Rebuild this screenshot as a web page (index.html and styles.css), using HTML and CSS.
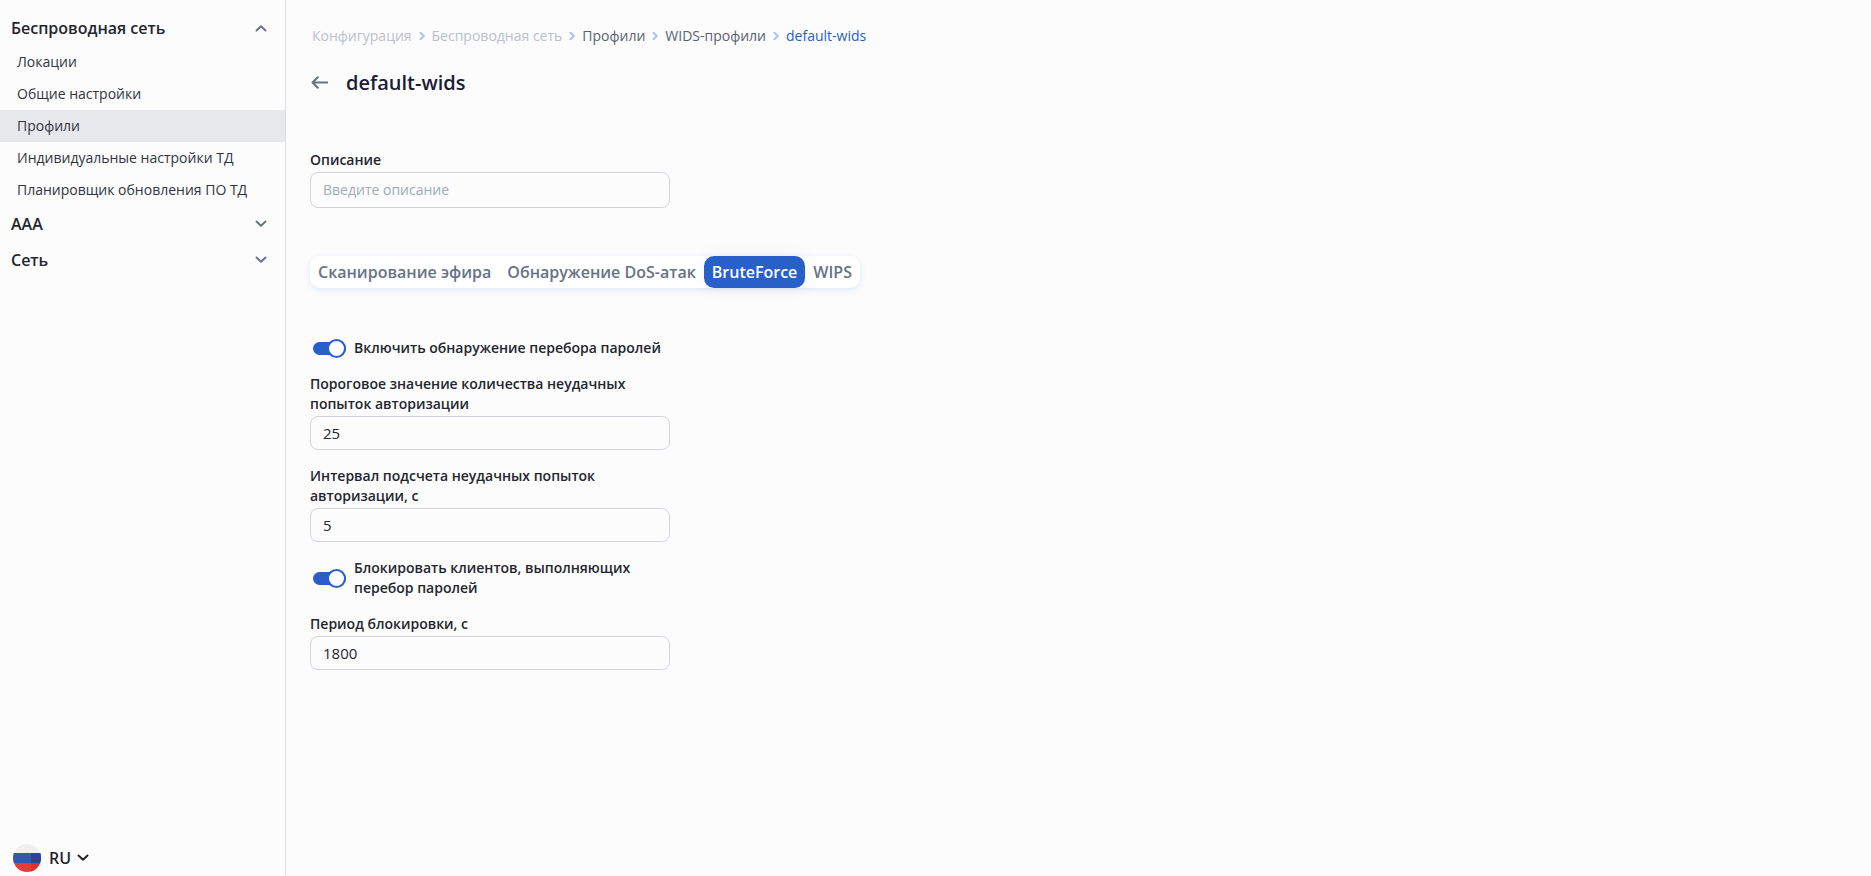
FILE: index.html
```html
<!DOCTYPE html>
<html lang="ru">
<head>
<meta charset="utf-8">
<title>default-wids</title>
<link rel="stylesheet" href="styles.css">
</head>
<body>
<div class="app">
  <aside class="sidebar">
    <nav class="menu">
      <button class="group" type="button" aria-expanded="true">Беспроводная сеть
        <svg class="chevron" viewBox="0 0 12 8"><path d="M1.5 6.500 6 2.300 10.500 6.500"/></svg>
      </button>
      <a class="item" href="#">Локации</a>
      <a class="item" href="#">Общие настройки</a>
      <a class="item item-active" href="#">Профили</a>
      <a class="item" href="#">Индивидуальные настройки ТД</a>
      <a class="item" href="#">Планировщик обновления ПО ТД</a>
      <button class="group" type="button" aria-expanded="false">AAA
        <svg class="chevron" viewBox="0 0 12 8"><path d="M1.500 1.500 6 5.700 10.500 1.500"/></svg>
      </button>
      <button class="group" type="button" aria-expanded="false">Сеть
        <svg class="chevron" viewBox="0 0 12 8"><path d="M1.500 1.500 6 5.700 10.500 1.500"/></svg>
      </button>
    </nav>
    <button class="language" type="button">
      <svg class="flag" viewBox="0 0 28 28">
        <clipPath id="round"><circle cx="14" cy="14" r="14"/></clipPath>
        <g clip-path="url(#round)">
          <path fill="#f0f0f0" d="M0 0h28v9H0z"/>
          <path fill="#3757a6" d="M0 9h28v10H0z"/>
          <path fill="#2a4593" d="M18 9h10v10H18z"/>
          <path fill="#e73b36" d="M0 19h28v9H0z"/>
          <path fill="#dc2f2c" d="M18 19h10v9H18z"/>
        </g>
      </svg>
      <span class="language-name">RU
        <svg class="chevron chevron-dark" viewBox="0 0 12 8"><path d="M1.500 1.500 6 5.700 10.500 1.500"/></svg>
      </span>
    </button>
  </aside>
  <main class="content">
    <nav class="breadcrumbs">
      <span class="crumb-muted">Конфигурация</span>
      <svg class="separator" viewBox="0 0 6 8"><path d="M1.500 .8 4.800 4 1.500 7.200"/></svg>
      <span class="crumb-muted">Беспроводная сеть</span>
      <svg class="separator" viewBox="0 0 6 8"><path d="M1.500 .8 4.800 4 1.500 7.200"/></svg>
      <a class="crumb" href="#">Профили</a>
      <svg class="separator" viewBox="0 0 6 8"><path d="M1.500 .8 4.800 4 1.500 7.200"/></svg>
      <a class="crumb" href="#">WIDS-профили</a>
      <svg class="separator" viewBox="0 0 6 8"><path d="M1.500 .8 4.800 4 1.500 7.200"/></svg>
      <a class="crumb crumb-current" href="#">default-wids</a>
    </nav>
    <header class="heading">
      <button class="back" type="button" aria-label="Назад">
        <svg viewBox="0 0 18 14"><path d="M17.500 6.500H2.500M7.800 1.300 2.500 6.500 7.800 11.700"/></svg>
      </button>
      <h1 class="title">default-wids</h1>
    </header>
    <div class="field">
      <label for="description">Описание</label>
      <input class="input input-tall" id="description" type="text" placeholder="Введите описание">
    </div>
    <div class="tabs" role="tablist">
      <button class="tab" type="button" role="tab">Сканирование эфира</button>
      <button class="tab" type="button" role="tab">Обнаружение DoS-атак</button>
      <button class="tab tab-active" type="button" role="tab" aria-selected="true">BruteForce</button>
      <button class="tab" type="button" role="tab">WIPS</button>
    </div>
    <form class="form">
      <label class="toggle"><input class="switch" type="checkbox" checked><span>Включить обнаружение перебора паролей</span></label>
      <div class="field">
        <label for="threshold">Пороговое значение количества неудачных попыток авторизации</label>
        <input class="input" id="threshold" type="text" inputmode="numeric" value="25">
      </div>
      <div class="field">
        <label for="interval">Интервал подсчета неудачных попыток авторизации, с</label>
        <input class="input" id="interval" type="text" inputmode="numeric" value="5">
      </div>
      <label class="toggle"><input class="switch" type="checkbox" checked><span>Блокировать клиентов, выполняющих перебор паролей</span></label>
      <div class="field">
        <label for="period">Период блокировки, с</label>
        <input class="input" id="period" type="text" inputmode="numeric" value="1800">
      </div>
    </form>
  </main>
</div>
</body>
</html>
```

FILE: styles.css
```css
*, *::before { box-sizing: border-box; }

body {
  margin: 0;
  background: #fcfcfd;
  color: #24262d;
  font: 14px/20px "Open Sans", "Noto Sans", sans-serif;
}

button, input { font: inherit; color: inherit; }
button { margin: 0; padding: 0; border: 0; background: none; cursor: pointer; }
a { color: inherit; text-decoration: none; }
svg { display: block; flex: none; fill: none; stroke-linecap: round; stroke-linejoin: round; }

.app { display: flex; min-height: 100vh; }

.sidebar {
  display: flex;
  flex: 0 0 286px;
  flex-direction: column;
  justify-content: space-between;
  padding-top: 10px;
  border-right: 1px solid #dfe0e5;
}

.menu { display: flex; flex-direction: column; }

.group {
  display: flex;
  align-items: center;
  justify-content: space-between;
  height: 36px;
  padding: 0 18px 0 11px;
  font-size: 16px;
  font-weight: 600;
}

.chevron { width: 12px; height: 8px; stroke: #6b7487; stroke-width: 2; }
.chevron-dark { stroke: #24262d; }

.item { padding: 6px 17px; color: #32343c; }
.item-active { background: #e7e8ec; }

.language {
  display: flex;
  align-items: center;
  align-self: flex-start;
  gap: 8px;
  padding: 0 13px 4px;
  font-size: 16px;
  font-weight: 600;
}

.language-name { display: flex; align-items: center; gap: 6px; }
.flag { width: 28px; height: 28px; }

.content { flex: 1; min-width: 0; padding: 26px 24px; }

.breadcrumbs { display: flex; align-items: center; gap: 7px; padding-left: 2px; }
.separator { width: 6px; height: 8px; stroke: #a9c5f7; stroke-width: 2; }
.crumb-muted { color: #bbc0ca; }
.crumb { color: #596273; }
.crumb-current { color: #285fc9; }

.heading { display: flex; align-items: center; gap: 18px; margin: 23px 0 53px; }
.back svg { width: 18px; height: 14px; stroke: #657287; stroke-width: 2; }
.title { margin: 0; color: #1a1d34; font-size: 20px; font-weight: 600; line-height: 28px; }

.field { display: flex; flex-direction: column; gap: 2px; width: 360px; font-weight: 600; }

.input {
  width: 100%;
  height: 34px;
  padding: 0 12px;
  border: 1px solid #d2d5df;
  border-radius: 8px;
  background: transparent;
  font-size: 15px;
  font-weight: 400;
}

.input-tall { height: 36px; padding-bottom: 2px; font-size: 14px; }
.input::placeholder { color: #a2aaba; opacity: 1; }

.tabs {
  display: flex;
  width: fit-content;
  margin: 48px 0 50px;
  border-radius: 10px;
  background: #fff;
  box-shadow: 0 2px 6px #dfe6f4;
}

.tab {
  height: 32px;
  padding: 0 8px;
  border-radius: 10px;
  color: #677285;
  font-size: 16px;
  font-weight: 600;
}

.tab-active { background: #285fc9; color: #fff; box-shadow: 0 0 20px #0000000d; }

.form { display: flex; flex-direction: column; gap: 16px; width: 360px; }

.toggle { display: flex; align-items: center; gap: 8px; padding-left: 3px; font-weight: 600; }

.switch {
  display: flex;
  flex: none;
  align-items: center;
  justify-content: flex-end;
  width: 33px;
  height: 13px;
  margin: 0;
  border-radius: 7px;
  background: #285fc9;
  appearance: none;
}

.switch::before {
  content: "";
  flex: none;
  width: 19px;
  height: 19px;
  border: 2px solid #285fc9;
  border-radius: 50%;
  background: #fff;
}
```
